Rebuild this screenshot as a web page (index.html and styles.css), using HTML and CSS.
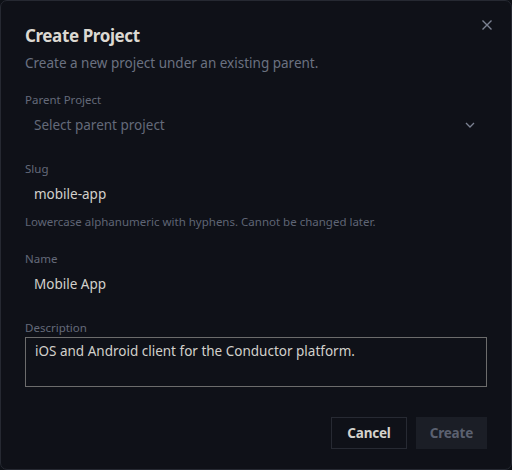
FILE: index.html
```html
<!DOCTYPE html>
<html lang="en">
<head>
    <meta charset="UTF-8">
    <meta name="viewport" content="width=device-width, initial-scale=1.0">
    <title>Create Project</title>
    <link rel="stylesheet" href="styles.css">
</head>
<body>
    <div class="dialog">
        <button class="close" aria-label="Close">
            <svg width="12" height="12" viewBox="0 0 12 12"><path d="M1.5 1.5l9 9M10.5 1.5l-9 9" stroke="currentColor" stroke-width="1.4" fill="none"/></svg>
        </button>
        <h2 class="title">Create Project</h2>
        <p class="subtitle">Create a new project under an existing parent.</p>

        <div class="field field-first">
            <label class="label">Parent Project</label>
            <div class="select">
                <span class="placeholder">Select parent project</span>
                <svg class="chevron" width="10" height="6" viewBox="0 0 10 6"><path d="M1 1l4 4 4-4" stroke="currentColor" stroke-width="1.3" fill="none"/></svg>
            </div>
        </div>

        <div class="field">
            <label class="label">Slug</label>
            <div class="input">mobile-app</div>
            <p class="hint">Lowercase alphanumeric with hyphens. Cannot be changed later.</p>
        </div>

        <div class="field">
            <label class="label">Name</label>
            <div class="input">Mobile App</div>
        </div>

        <div class="field">
            <label class="label">Description</label>
            <div class="textarea">iOS and Android client for the Conductor platform.</div>
        </div>

        <div class="actions">
            <button class="button button-cancel">Cancel</button>
            <button class="button button-create">Create</button>
        </div>
    </div>
</body>
</html>
```

FILE: styles.css
```css
html, body {
    margin: 0;
    padding: 0;
    background-color: #0e1117;
}
body {
    font-family: "Noto Sans", "Open Sans", sans-serif;
    font-size: 13.5px;
    color: #d4d2cc;
}
.dialog {
    position: relative;
    box-sizing: border-box;
    width: 512px;
    height: 470px;
    padding: 23px 24px 22px 24px;
    background-color: #0f1118;
    border: 1px solid #262932;
    border-radius: 7px;
}
.close {
    position: absolute;
    top: 18px;
    right: 18px;
    padding: 0;
    background: none;
    border: none;
    color: #7c8292;
    cursor: pointer;
}
.close svg {
    display: block;
}
.title {
    margin: 0;
    font-size: 17px;
    line-height: 24px;
    font-weight: 700;
    letter-spacing: -0.4px;
    color: #dcd9d2;
}
.subtitle {
    margin: 5px 0 0 0;
    line-height: 20px;
    color: #6b7181;
}
.field {
    margin-top: 21px;
}
.field-first {
    margin-top: 19px;
}
.label {
    display: block;
    font-size: 11.5px;
    line-height: 16px;
    color: #646a7a;
}
.select, .input {
    display: flex;
    align-items: center;
    justify-content: space-between;
    box-sizing: border-box;
    height: 30px;
    margin-top: 2px;
    padding: 0 12px 0 9px;
}
.input {
    color: #d2d0cb;
}
.placeholder {
    color: #646a7a;
}
.chevron {
    color: #7c8292;
}
.hint {
    margin: 5px 0 0 0;
    font-size: 11.5px;
    line-height: 16px;
    color: #5f6575;
}
.textarea {
    box-sizing: border-box;
    height: 50px;
    margin-top: 1px;
    padding: 3px 8px 4px 9px;
    line-height: 20px;
    border: 1px solid #6c6c6c;
    color: #d2d0cb;
}
.actions {
    display: flex;
    justify-content: flex-end;
    gap: 9px;
    margin-top: 30px;
}
.button {
    height: 32px;
    padding: 0 15px;
    font-family: inherit;
    font-size: 13.5px;
    font-weight: 700;
    letter-spacing: -0.2px;
    border: 1px solid transparent;
    cursor: pointer;
}
.button-cancel {
    background-color: #0f1118;
    border-color: #272a33;
    color: #d4d2cc;
}
.button-create {
    padding: 0 13px;
    background-color: #1b1e26;
    color: #5b6170;
}
```
